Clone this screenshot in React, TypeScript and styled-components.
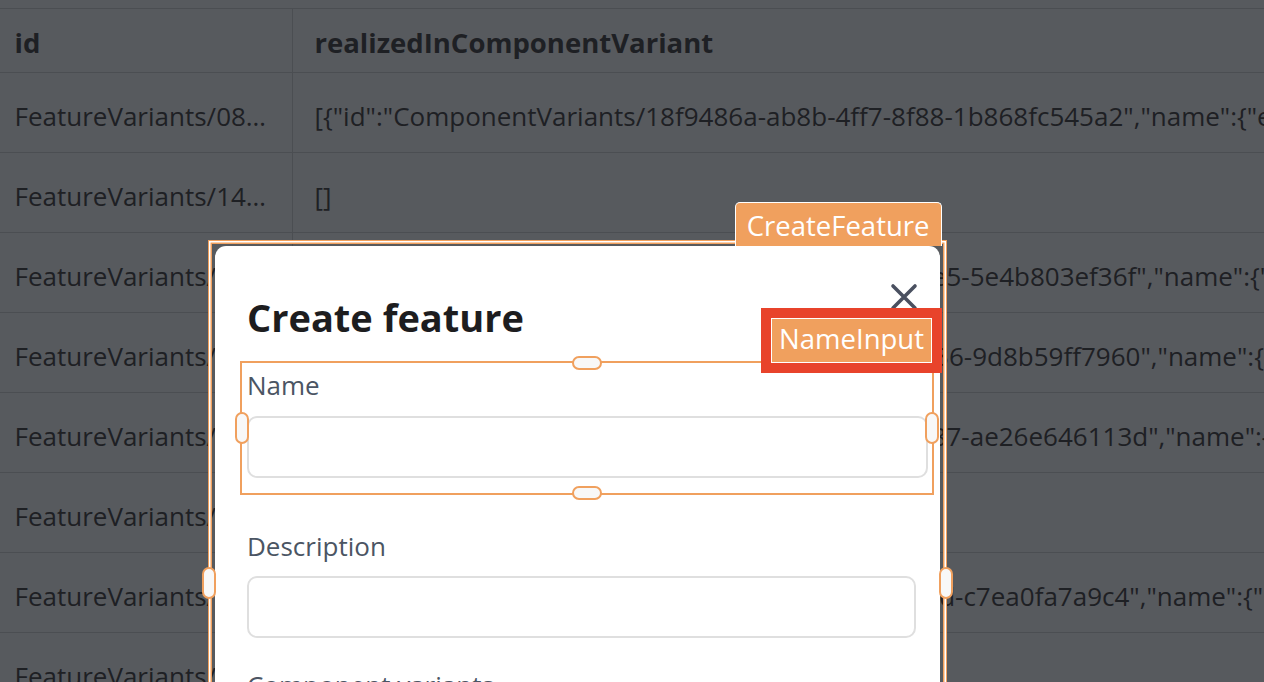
import React from "react";
import styled, { createGlobalStyle } from "styled-components";

const ORANGE = "#f0a05e";
const LINE = "#4b4e52";
const BG = "#575a5e";

const GlobalStyle = createGlobalStyle`
  *, *::before, *::after { box-sizing: border-box; }
  html, body { margin: 0; padding: 0; background: ${BG}; }
  body { font-family: "Open Sans", "Noto Sans", sans-serif; overflow: hidden; }
`;

const Page = styled.div`
  position: relative;
  width: 1264px;
  height: 682px;
  overflow: hidden;
  background: ${BG};
`;

const Toolbar = styled.div`
  height: 9px;
  border-bottom: 1px solid ${LINE};
`;

const Table = styled.div`
  width: 2400px;
  display: flex;
  flex-direction: column;
`;

const Row = styled.div<{ $header?: boolean }>`
  display: grid;
  grid-template-columns: 293px 1fr;
  height: ${(p) => (p.$header ? 64 : 80)}px;
  border-bottom: 1px solid ${LINE};
`;

const Cell = styled.div<{ $first?: boolean; $header?: boolean }>`
  padding: ${(p) => (p.$header ? 5 : 7)}px ${(p) => (p.$first ? "14.5px" : "21.5px")} 0;
  border-right: ${(p) => (p.$first ? `1px solid ${LINE}` : "none")};
  font-size: ${(p) => (p.$header ? 27.5 : 26)}px;
  font-weight: ${(p) => (p.$header ? 700 : 400)};
  color: #1e2024;
  line-height: ${(p) => (p.$header ? 58 : 72)}px;
  white-space: nowrap;
  overflow: hidden;
  text-overflow: ${(p) => (p.$first ? "ellipsis" : "clip")};
`;

const ModalLayer = styled.div`
  position: absolute;
  inset: 0;
`;

const ComponentFrame = styled.div`
  position: absolute;
  left: 208px;
  top: 240px;
  width: 739px;
  height: 686px;
  border: 1.5px solid ${ORANGE};
  box-shadow: inset 0 0 0 1.5px #fff, inset 0 0 0 3px ${ORANGE};
  padding: 5px 6px;
`;

const FrameTab = styled.div`
  position: absolute;
  right: 4.5px;
  top: -39.5px;
  height: 44px;
  padding: 4px 11px 0;
  background: ${ORANGE};
  border: 1px solid #fff;
  border-bottom: none;
  border-radius: 5px 5px 0 0;
  color: #fff;
  font-size: 27.5px;
  line-height: 37px;
  white-space: nowrap;
  z-index: 2;
`;

type Side = "left" | "right" | "top" | "bottom";

const Handle = styled.span<{ $side: Side }>`
  position: absolute;
  z-index: 3;
  width: ${(p) => (p.$side === "left" || p.$side === "right" ? 14 : 30)}px;
  height: ${(p) => (p.$side === "left" || p.$side === "right" ? 32 : 14)}px;
  border: 2px solid ${ORANGE};
  background: #f8f8f8;
  border-radius: 8px;
  transform: translate(-50%, -50%);
  left: ${(p) => (p.$side === "left" ? "0" : p.$side === "right" ? "100%" : "50%")};
  top: ${(p) => (p.$side === "top" ? "0" : p.$side === "bottom" ? "100%" : "50%")};
`;

const Modal = styled.div`
  position: relative;
  height: 100%;
  background: #fff;
  border-radius: 11px;
  padding: 44px 24px 0 32px;
  display: flex;
  flex-direction: column;
`;

const Title = styled.h2`
  margin: 0 0 24px;
  font-size: 38px;
  font-weight: 700;
  line-height: 54px;
  color: #1d1d1f;
`;

const CloseButton = styled.button`
  position: absolute;
  top: 37px;
  right: 22px;
  width: 28px;
  height: 28px;
  padding: 0;
  border: 0;
  background: none;
  color: #4a5060;
  display: flex;
`;

const Field = styled.div<{ $mb: number; $extend?: number }>`
  position: relative;
  margin-bottom: ${(p) => p.$mb}px;
  margin-right: ${(p) => -(p.$extend || 0)}px;
  display: flex;
  flex-direction: column;
  gap: 12.5px;
`;

const Label = styled.label`
  display: block;
  font-size: 26px;
  line-height: 35px;
  color: #4b5563;
`;

const TextInput = styled.input`
  display: block;
  width: 100%;
  height: 62px;
  border: 2px solid #dfdfdf;
  border-radius: 10px;
  background: #fff;
  outline: none;
  font: inherit;
`;

const FieldFrame = styled.div`
  position: absolute;
  top: -7.5px;
  left: -7.5px;
  right: -6.5px;
  bottom: -17.5px;
  border: 2px solid ${ORANGE};
  pointer-events: none;
`;

const FieldTag = styled.div`
  position: absolute;
  right: 0;
  bottom: 100%;
  z-index: 4;
  background: ${ORANGE};
  border: 1px solid #fff;
  outline: 10px solid #e8432b;
  color: #fff;
  font-size: 27.5px;
  line-height: 35px;
  padding: 2px 7px 6px;
  white-space: nowrap;
`;

const rows: [string, string][] = [
  [
    "FeatureVariants/08c4d2a1-7e55-4b0f-9a13-2f6e8c1d0b77",
    '[{"id":"ComponentVariants/18f9486a-ab8b-4ff7-8f88-1b868fc545a2","name":{"en":"Default","de":"Standard"}}]',
  ],
  ["FeatureVariants/14a9e7b3-2c61-4d8e-b0f4-6a3d9e5c2f18", "[]"],
  [
    "FeatureVariants/2b7d01c4-93fa-4e12-b8e5-0c1f7a6d3e92",
    '[{"id":"ComponentVariants/2b7d01c4-93fa-4e12-b8e5-5e4b803ef36f","name":{"en":"Compact"}}]',
  ],
  [
    "FeatureVariants/3f1a6c82-0d4b-47e9-a2c6-8b5e1f9d4a30",
    '[{"id":"ComponentVariants/c41e8a27-5d3b-4c90-a136-9d8b59ff7960","name":{"en":"Outline"}}]',
  ],
  [
    "FeatureVariants/4e8b2d19-6a7c-4f03-9d51-3c2a8e7f1b64",
    '[{"id":"ComponentVariants/7f02b9de-1a6c-4e55-9b87-ae26e646113d","name":{"en":"Filled"}}]',
  ],
  ["FeatureVariants/5a3c9f70-1e2d-4b86-8c47-9f0e6d2a5b13", "[]"],
  [
    "FeatureVariants/6d0e4b28-9c1f-4a75-b3e2-7a8d5c6f0e91",
    '[{"id":"ComponentVariants/9e3c5a10-6b2f-4d7a-8f1d-c7ea0fa7a9c4","name":{"en":"Ghost"}}]',
  ],
  ["FeatureVariants/7b2f8e45-3d9a-4c10-a6b8-1e4f7c9d2a56", "[]"],
];

export default function App() {
  return (
    <Page>
      <GlobalStyle />
      <Toolbar />
      <Table>
        <Row $header>
          <Cell $first $header>id</Cell>
          <Cell $header>realizedInComponentVariant</Cell>
        </Row>
        {rows.map(([id, value]) => (
          <Row key={id}>
            <Cell $first>{id}</Cell>
            <Cell>{value}</Cell>
          </Row>
        ))}
      </Table>

      <ModalLayer>
        <ComponentFrame>
          <FrameTab>CreateFeature</FrameTab>
          <Modal>
            <CloseButton aria-label="Close">
              <svg width="28" height="28" viewBox="0 0 28 28" fill="none">
                <path
                  d="M3 3L25 25M25 3L3 25"
                  stroke="currentColor"
                  strokeWidth="3.6"
                  strokeLinecap="round"
                />
              </svg>
            </CloseButton>
            <Title>Create feature</Title>
            <Field $mb={51} $extend={11.5}>
              <Label>Name</Label>
              <TextInput />
              <FieldFrame>
                <FieldTag>NameInput</FieldTag>
                <Handle $side="top" />
                <Handle $side="bottom" />
                <Handle $side="left" />
                <Handle $side="right" />
              </FieldFrame>
            </Field>
            <Field $mb={30}>
              <Label>Description</Label>
              <TextInput />
            </Field>
            <Field $mb={30}>
              <Label>Component variants</Label>
              <TextInput />
            </Field>
          </Modal>
          <Handle $side="left" />
          <Handle $side="right" />
        </ComponentFrame>
      </ModalLayer>
    </Page>
  );
}
